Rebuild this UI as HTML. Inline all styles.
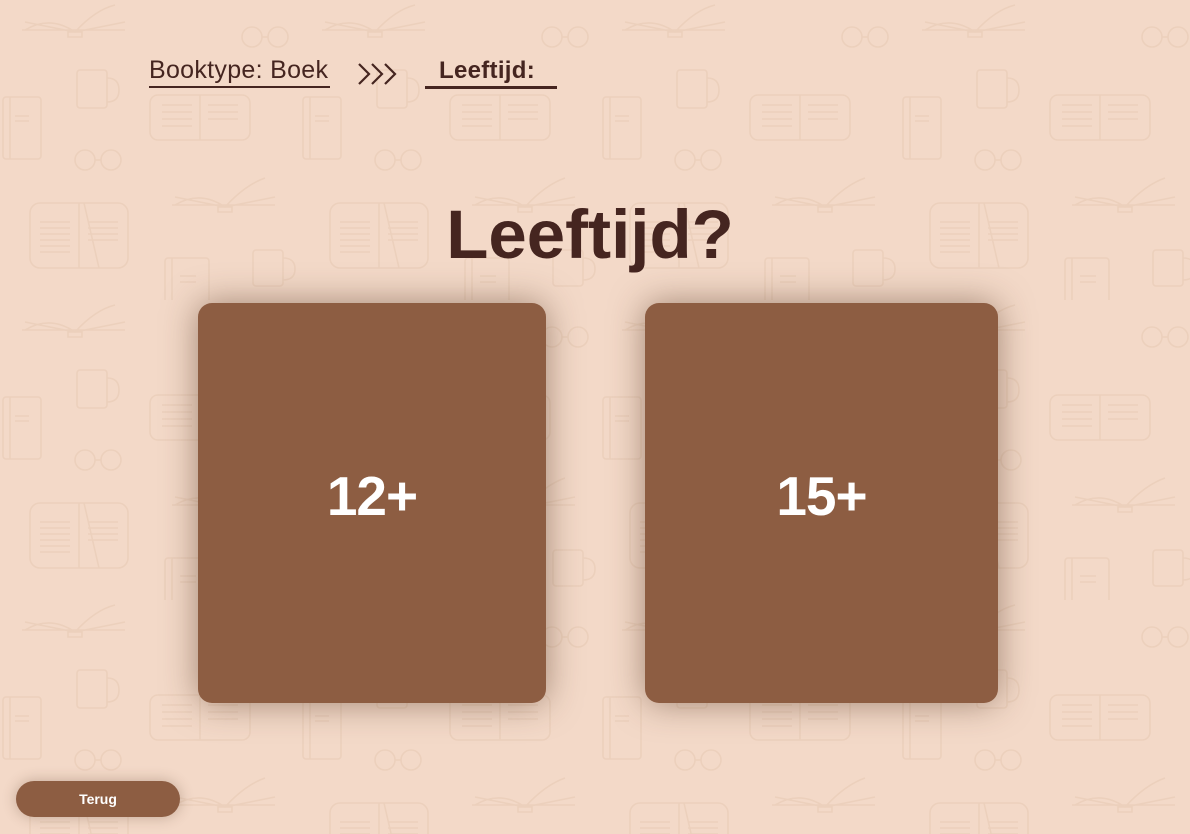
<!DOCTYPE html>
<html><head><meta charset="utf-8">
<style>
html,body{margin:0;padding:0;width:1190px;height:834px;overflow:hidden;}
body{background:#f3d9c8;font-family:"Liberation Sans",sans-serif;position:relative;}
#bg{position:absolute;left:0;top:0;width:1190px;height:834px;}
.crumb{position:absolute;top:55px;font-size:25px;color:#452520;}
.c1{left:149px;border-bottom:2px solid #452520;line-height:31px;letter-spacing:0.3px;width:181px;white-space:nowrap;}
.arrows{left:357px;top:62px;}
.c2{left:425px;width:132px;font-weight:bold;border-bottom:3px solid #452520;line-height:31px;padding-left:14px;box-sizing:border-box;font-size:24px;letter-spacing:0.3px;}
h1{position:absolute;left:0;width:1180px;top:196px;margin:0;text-align:center;font-size:69px;font-weight:bold;color:#452520;letter-spacing:0px;line-height:78px;}
.card{position:absolute;top:303px;height:400px;background:#8d5d42;border-radius:14px;box-shadow:0 0 34px rgba(80,50,30,.5);color:#fff;font-weight:bold;font-size:55px;display:flex;align-items:center;justify-content:center;letter-spacing:-1px;padding-bottom:14px;box-sizing:border-box;}
.k1{left:198px;width:348px;}
.k2{left:645px;width:353px;}
.btn{position:absolute;left:16px;top:781px;width:164px;height:36px;border-radius:18px;background:#8d5d42;color:#fff;font-weight:bold;font-size:14px;display:flex;align-items:center;justify-content:center;box-shadow:0 0 14px rgba(80,50,30,.3);}
</style></head><body>
<svg id="bg" viewBox="0 0 1190 834">
<defs>
<pattern id="p" width="300" height="300" patternUnits="userSpaceOnUse">
<g fill="none" stroke="#ecd0bc" stroke-width="1.6">
<path d="M25 30 Q50 15 75 32 Q95 10 115 5 M25 22 L75 32 L125 22 M22 30 L125 30 M68 32 h14 v5 h-14z"/>
<circle cx="252" cy="37" r="10"/><circle cx="278" cy="37" r="10"/><path d="M262 37 h6"/>
<rect x="77" y="70" width="30" height="38" rx="3"/><path d="M107 78 q12 0 12 12 q0 12 -12 12"/>
<rect x="3" y="97" width="38" height="62" rx="3"/><path d="M10 97 v62 M15 116 h14 M15 121 h14"/>
<rect x="150" y="95" width="100" height="45" rx="8"/><path d="M200 95 v45 M162 105 h30 M162 112 h30 M162 119 h30 M162 126 h30 M208 105 h30 M208 112 h30 M208 119 h30"/>
<circle cx="85" cy="160" r="10"/><circle cx="111" cy="160" r="10"/><path d="M95 160 h6"/>
<path d="M175 205 Q200 190 225 207 Q245 185 265 178 M175 197 L225 207 L275 197 M172 205 L275 205 M218 207 h14 v5 h-14z"/>
<rect x="30" y="203" width="98" height="65" rx="10"/><path d="M79 203 v65 M40 222 h30 M40 228 h30 M40 234 h30 M40 240 h30 M40 246 h30 M40 252 h30 M88 222 h30 M88 228 h30 M88 234 h30 M88 240 h30 M84 203 l15 65"/>
<rect x="253" y="250" width="30" height="36" rx="3"/><path d="M283 258 q12 0 12 11 q0 11 -12 11"/>
<rect x="165" y="258" width="44" height="58" rx="3"/><path d="M172 258 v58 M180 276 h16 M180 282 h16"/>
</g>
</pattern>
</defs>
<rect width="1190" height="834" fill="url(#p)"/>
</svg>
<div class="crumb c1">Booktype: Boek</div>
<svg class="crumb arrows" width="42" height="24" viewBox="0 0 42 24"><g fill="none" stroke="#452520" stroke-width="2.2"><path d="M2 2 L12 12 L2 22 M15 2 L25 12 L15 22 M28 2 L38 12 L28 22"/></g></svg>
<div class="crumb c2">Leeftijd:</div>
<h1>Leeftijd?</h1>
<div class="card k1">12+</div>
<div class="card k2">15+</div>
<div class="btn">Terug</div>
</body></html>
